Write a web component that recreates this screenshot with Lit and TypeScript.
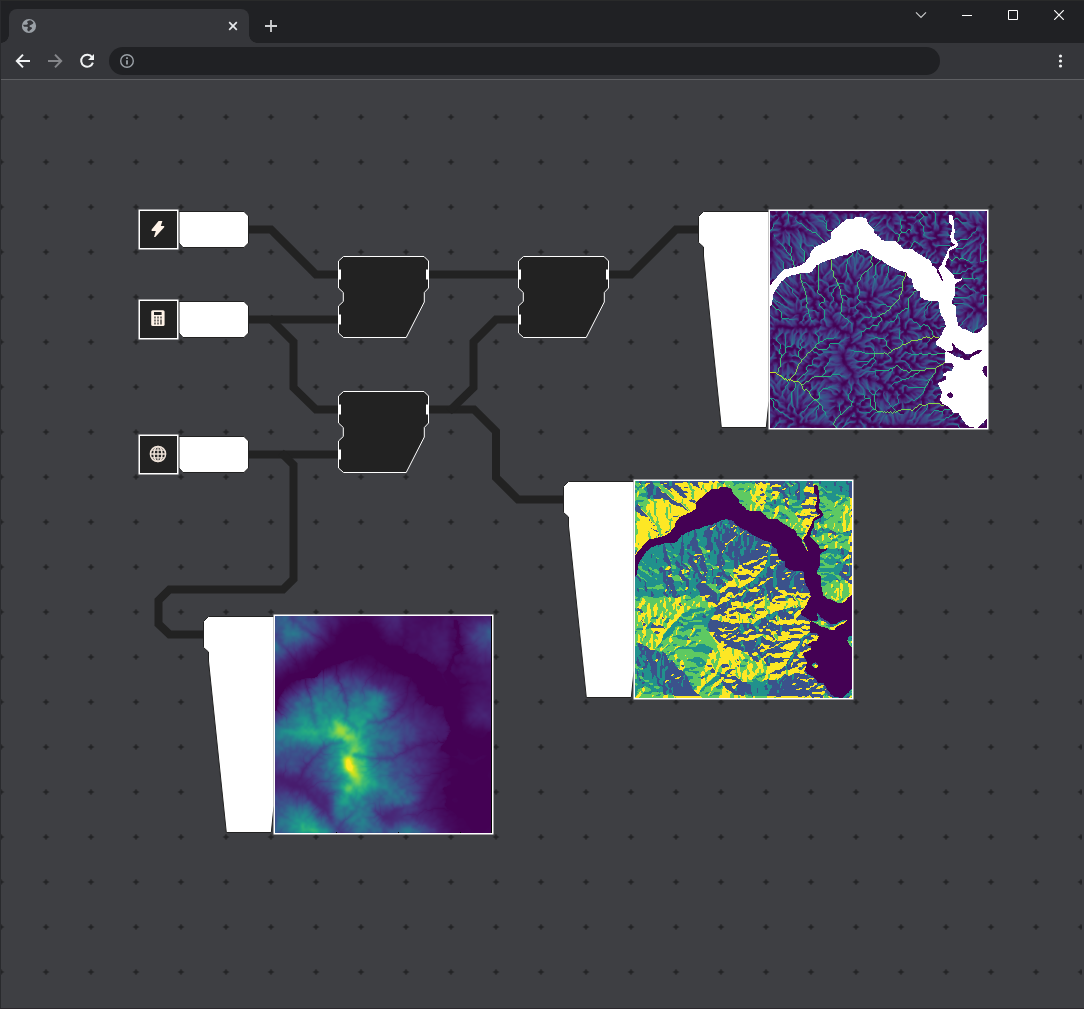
import { LitElement, html, svg, css } from "lit";
import { customElement } from "lit/decorators.js";

type Pt = [number, number];

const N = 217;

const parse = (s: string): Pt[] => s.trim().split(/\s+/).map((p) => p.split(",").map(Number) as Pt);

/* Water outline and islands, in thirds of a raster cell. */
const WATER = parse(`0,225 12,207 28,189 45,174 60,172 78,167 90,165 105,153 120,135 122,125 135,107 150,102 168,94 182,84 184,62 198,52 215,35 230,25 250,23 257,17 275,17 290,25 295,37 310,54 315,67 328,77 335,88 345,90 377,90 382,97 390,102 400,114 425,114 442,125 460,137 482,149 486,162 500,174 503,184 516,210 521,213 517,199 506,175 512,165 522,147 528,132 535,112 550,104 557,103 545,92 539,75 545,62 547,42 540,35 538,12 547,12 550,27 552,47 555,62 551,72 552,82 565,97 563,105 550,113 538,119 537,139 530,147 524,167 535,177 550,192 555,205 575,202 575,208 557,215 553,237 554,252 546,267 546,279 556,282 557,312 563,342 575,352 595,359 612,367 630,364 640,349 651,342 651,464 640,467 637,479 644,492 651,500 651,622 640,635 628,645 622,651 600,648 588,639 575,622 565,607 550,605 535,587 518,579 510,567 515,542 508,527 505,515 528,507 528,497 515,492 530,482 545,479 550,465 545,457 525,455 525,427 528,419 514,410 500,402 500,392 515,372 517,359 528,345 522,327 510,307 506,272 480,269 460,264 452,257 450,242 432,232 428,219 425,205 410,195 410,185 390,179 370,170 350,159 335,147 320,142 305,132 295,119 278,114 260,117 245,125 230,132 210,135 198,142 180,145 160,154 140,162 128,180 115,187 90,186 70,192 50,197 35,212 22,227 12,247 7,277 0,292`);
const ISLANDS = [
  parse("526,421 545,421 549,410 544,394 548,395 556,407 575,420 588,429 605,428 620,418 638,416 628,427 605,437 598,447 588,449 575,440 555,436 540,426"),
  parse("532,549 539,546 543,541 546,549 550,552 547,560 540,561 531,556"),
];

/* Broad relief, one sample every 50 units. */
const RELIEF = [
  [32, 28, 25, 14, 4, 1, 4, 12, 5, 3, 4, 4, 8, 10],
  [27, 35, 28, 10, 0, 0, 0, 6, 4, 5, 6, 3, 20, 30],
  [32, 20, 11, 1, 0, 0, 0, 0, 3, 5, 7, 2, 13, 19],
  [12, 4, 0, 0, 6, 5, 3, 0, 0, 2, 3, 3, 6, 9],
  [0, 2, 14, 27, 24, 24, 13, 8, 4, 0, 0, 1, 4, 6],
  [1, 24, 36, 40, 36, 38, 45, 20, 8, 3, 0, 0, 5, 6],
  [16, 38, 50, 50, 54, 53, 43, 23, 16, 10, 5, 0, 9, 10],
  [42, 50, 57, 62, 74, 60, 38, 28, 20, 13, 8, 0, 0, 2],
  [30, 28, 28, 36, 58, 68, 40, 28, 17, 11, 4, 0, 1, 0],
  [19, 24, 22, 36, 60, 70, 42, 28, 20, 12, 3, 0, 0, 0],
  [11, 10, 13, 27, 48, 72, 52, 34, 24, 11, 3, 0, 0, 0],
  [26, 24, 20, 14, 44, 50, 30, 34, 31, 10, 3, 0, 0, 0],
  [31, 44, 50, 23, 36, 43, 27, 12, 16, 9, 3, 0, 0, 0],
  [32, 46, 66, 52, 20, 38, 32, 30, 42, 26, 9, 1, 0, 0],
];

/* Crests: x, y, radius, gain. */
const CRESTS: [number, number, number, number][] = [
  [185, 327, 12, 0.12], [200, 342, 10, 0.1], [215, 360, 10, 0.1], [228, 380, 10, 0.1], [235, 402, 11, 0.16],
  [218, 432, 12, 0.34], [224, 454, 11, 0.34], [234, 475, 11, 0.12], [252, 492, 12, 0.06],
  [214, 516, 11, 0.22], [200, 550, 12, 0.12], [186, 580, 14, 0.08],
];

const STREAMS: Pt[][] = [
  parse("0,479 22,486 45,504 80,511 115,547 155,587 178,627 186,632"),
  parse("45,504 62,500 85,465 110,430 135,402 150,388 195,376"),
  parse("186,632 210,610 230,592 250,570"),
  parse("525,455 500,462 475,500 455,547 430,567 390,569 360,585 320,607 300,585"),
  parse("506,376 460,378 420,389 380,410 350,425 290,427 240,415"),
  parse("92,192 100,230 110,260 112,295 120,330"),
  parse("185,148 188,190 205,225 215,262 212,310 245,335"),
  parse("400,188 392,240 378,270 345,305 310,318 280,316"),
  parse("70,162 62,135 35,100 12,75 0,62"),
  parse("155,92 145,70 110,52 80,27 50,5"),
  parse("382,90 390,60 387,25 392,0"),
  parse("155,0 162,30 168,62"),
  parse("650,145 610,150 580,140 540,142"),
  parse("650,215 620,200 585,202"),
];

const VIRIDIS = [
  [68, 1, 84], [71, 24, 106], [72, 40, 120], [67, 62, 133], [59, 82, 139], [49, 104, 142],
  [42, 120, 142], [35, 136, 142], [31, 152, 139], [34, 168, 132], [53, 183, 121],
  [84, 197, 104], [122, 209, 81], [165, 219, 54], [210, 226, 27], [253, 231, 37],
];

const viridis = (t: number): number[] => {
  const p = Math.min(0.9999, Math.max(0, t)) * 15;
  const i = Math.floor(p);
  const f = p - i;
  return VIRIDIS[i].map((c, k) => c + (VIRIDIS[i + 1][k] - c) * f);
};

/* Colour position for a drained area: crests stay dark, slopes level out, channels climb. */
const FLOW_STOPS: Pt[] = [[0, 0], [0.22, 0.02], [0.75, 0.2], [1.3, 0.29], [1.7, 0.36], [2.1, 0.54], [2.9, 0.72], [3.6, 0.9], [5, 1]];
const flowTone = (area: number): number => {
  const l = Math.log10(area);
  let k = 0;
  while (k < FLOW_STOPS.length - 2 && l > FLOW_STOPS[k + 1][0]) k++;
  const [a, u] = FLOW_STOPS[k], [b, v] = FLOW_STOPS[k + 1];
  return u + ((v - u) * (l - a)) / (b - a);
};

const hash = (x: number, y: number, s: number): number => {
  let h = Math.imul(x, 374761393) ^ Math.imul(y, 668265263) ^ Math.imul(s, 974634777);
  h = Math.imul(h ^ (h >>> 13), 1274126177);
  h ^= h >>> 16;
  return (h >>> 0) / 4294967296;
};
const ease = (t: number) => t * t * (3 - 2 * t);
const noise = (x: number, y: number, s: number): number => {
  const i = Math.floor(x), j = Math.floor(y);
  const u = ease(x - i), v = ease(y - j);
  const a = hash(i, j, s), b = hash(i + 1, j, s), c = hash(i, j + 1, s), d = hash(i + 1, j + 1, s);
  return a + (b - a) * u + (c - a) * v + (a - b - c + d) * u * v - 0.5;
};

const cubic = (a: number, b: number, c: number, d: number, t: number) =>
  b + 0.5 * t * (c - a + t * (2 * a - 5 * b + 4 * c - d + t * (3 * (b - c) + d - a)));

const relief = (x: number, y: number): number => {
  const gx = x / 50, gy = y / 50;
  const i = Math.floor(gx), j = Math.floor(gy);
  const at = (r: number, c: number) => RELIEF[Math.max(0, Math.min(13, r))][Math.max(0, Math.min(13, c))];
  const rows = [-1, 0, 1, 2].map((k) => cubic(at(j + k, i - 1), at(j + k, i), at(j + k, i + 1), at(j + k, i + 2), gx - i));
  return Math.max(0, cubic(rows[0], rows[1], rows[2], rows[3], gy - j)) / 100;
};

const DX = [1, 1, 0, -1, -1, -1, 0, 1];
const DY = [0, 1, 1, 1, 0, -1, -1, -1];

interface Terrain { water: Uint8Array; height: Float64Array; flow: Float64Array; }

function waterMask(): Uint8Array {
  const c = document.createElement("canvas");
  c.width = c.height = N;
  const g = c.getContext("2d")!;
  const trace = (pts: Pt[]) => {
    g.beginPath();
    pts.forEach(([x, y], i) => {
      const px = x / 3 + (i ? (hash(i, 1, 4) - 0.5) * 0.8 : 0), py = y / 3;
      i ? g.lineTo(px, py) : g.moveTo(px, py);
    });
    g.closePath();
    g.fill();
  };
  trace(WATER);
  g.globalCompositeOperation = "destination-out";
  ISLANDS.forEach(trace);
  const d = g.getImageData(0, 0, N, N).data;
  const m = new Uint8Array(N * N);
  for (let y = 0; y < N; y++) for (let x = 0; x < N; x++) {
    const jag = noise(x / 1.6, y / 1.6, 12) * 150;
    m[y * N + x] = d[(y * N + x) * 4 + 3] > 115 + jag ? 1 : 0;
  }
  return m;
}

/* Priority flood from the outlets: visiting order and downstream receiver. */
function flood(h: Float64Array, outlet: Uint8Array, order: Int32Array, rec: Int32Array) {
  const total = N * N;
  const seen = new Uint8Array(total);
  const key = new Float64Array(total);
  const heap = new Int32Array(total + 1);
  let size = 0, n = 0;
  const push = (v: number) => {
    let i = ++size;
    while (i > 1 && key[heap[i >> 1]] > key[v]) { heap[i] = heap[i >> 1]; i >>= 1; }
    heap[i] = v;
  };
  const pop = () => {
    const top = heap[1], v = heap[size--];
    let i = 1;
    for (;;) {
      let c = i * 2;
      if (c > size) break;
      if (c < size && key[heap[c + 1]] < key[heap[c]]) c++;
      if (key[heap[c]] >= key[v]) break;
      heap[i] = heap[c];
      i = c;
    }
    heap[i] = v;
    return top;
  };
  for (let i = 0; i < total; i++) if (outlet[i]) { seen[i] = 1; key[i] = h[i]; rec[i] = i; push(i); }
  while (size) {
    const i = pop();
    order[n++] = i;
    const x = i % N, y = (i / N) | 0;
    if (!outlet[i]) {
      let best = 0, r = rec[i];
      for (let k = 0; k < 8; k++) {
        const a = x + DX[k], b = y + DY[k];
        if (a < 0 || b < 0 || a >= N || b >= N) continue;
        const j = b * N + a;
        if (!seen[j] || key[j] >= key[i]) continue;
        const s = (h[i] - h[j]) / (k & 1 ? 1.414 : 1);
        if (s > best) { best = s; r = j; }
      }
      rec[i] = r;
    }
    for (let k = 0; k < 8; k++) {
      const a = x + DX[k], b = y + DY[k];
      if (a < 0 || b < 0 || a >= N || b >= N) continue;
      const j = b * N + a;
      if (seen[j]) continue;
      seen[j] = 1;
      key[j] = Math.max(h[j], key[i] + 1e-7);
      rec[j] = i;
      push(j);
    }
  }
}

function buildTerrain(): Terrain {
  const total = N * N;
  const water = waterMask();
  const target = new Float64Array(total);
  const h = new Float64Array(total);
  const outlet = new Uint8Array(total);
  const groove = new Float64Array(total);

  for (const s of STREAMS) {
    for (let k = 0; k + 1 < s.length; k++) {
      const [x0, y0] = s[k], [x1, y1] = s[k + 1];
      const steps = Math.ceil(Math.hypot(x1 - x0, y1 - y0) / 1.5);
      for (let q = 0; q <= steps; q++) {
        const cx = (x0 + ((x1 - x0) * q) / steps) / 3 + noise(q / 5, k, 8) * 1.6;
        const cy = (y0 + ((y1 - y0) * q) / steps) / 3 + noise(q / 5, k, 9) * 1.6;
        for (let b = -5; b <= 5; b++) for (let a = -5; a <= 5; a++) {
          const x = Math.round(cx) + a, y = Math.round(cy) + b;
          if (x < 0 || y < 0 || x >= N || y >= N) continue;
          const w = Math.exp(-((x - cx) ** 2 + (y - cy) ** 2) / 7);
          groove[y * N + x] = Math.max(groove[y * N + x], w);
        }
      }
    }
  }

  for (let y = 0; y < N; y++) for (let x = 0; x < N; x++) {
    const i = y * N + x;
    const u = x * 3, v = y * 3;
    let t = relief(u, v) * 1.08;
    for (const [cx, cy, r, g] of CRESTS) t += g * Math.exp(-((u - cx) ** 2 + (v - cy) ** 2) / (2 * r * r));
    const rough = noise(x / 10, y / 10, 1) * 0.08 + noise(x / 5.5, y / 5.5, 2) * 0.12 + noise(x / 3, y / 3, 3) * 0.09;
    t = t + 0.015 + rough * (0.1 + Math.min(0.75, t * 1.5));
    target[i] = water[i] ? 0 : Math.max(0.006, t) * (1 - 0.22 * groove[i]);
    const edge = x === 0 || y === 0 || x === N - 1 || y === N - 1;
    outlet[i] = water[i] || edge ? 1 : 0;
    h[i] = target[i] * (edge ? 0.9 : 1);
  }

  const order = new Int32Array(total), rec = new Int32Array(total);
  const area = new Float64Array(total);
  for (let it = 0; it < 18; it++) {
    flood(h, outlet, order, rec);
    area.fill(1);
    for (let n = total - 1; n >= 0; n--) { const i = order[n]; if (rec[i] !== i) area[rec[i]] += area[i]; }
    for (let n = 0; n < total; n++) {
      const i = order[n];
      if (outlet[i]) continue;
      const k = 0.045 * Math.sqrt(Math.max(0, area[i] - 2));
      h[i] = (h[i] + 0.17 * (target[i] - h[i]) + k * h[rec[i]]) / (1 + k);
    }
    const copy = h.slice();
    for (let y = 1; y < N - 1; y++) for (let x = 1; x < N - 1; x++) {
      const i = y * N + x;
      if (!outlet[i]) h[i] += 0.08 * (copy[i - 1] + copy[i + 1] + copy[i - N] + copy[i + N] - 4 * copy[i]);
    }
  }

  flood(h, outlet, order, rec);
  const flow = new Float64Array(total).fill(1);
  for (let n = total - 1; n >= 0; n--) {
    const i = order[n];
    if (outlet[i]) continue;
    if (flow[i] > 50) { flow[rec[i]] += flow[i]; continue; }
    const x = i % N, y = (i / N) | 0;
    let sum = 0;
    const w: number[] = [];
    for (let k = 0; k < 8; k++) {
      const s = Math.max(0, h[i] - h[(y + DY[k]) * N + x + DX[k]]) / (k & 1 ? 1.414 : 1);
      w.push(s ** 1.5);
      sum += w[k];
    }
    if (!sum) { flow[rec[i]] += flow[i]; continue; }
    for (let k = 0; k < 8; k++) if (w[k]) flow[(y + DY[k]) * N + x + DX[k]] += (flow[i] * w[k]) / sum;
  }
  return { water, height: h, flow };
}

let cached: Terrain | undefined;
const terrain = () => (cached ??= buildTerrain());

@customElement("terrain-map")
class TerrainMap extends LitElement {
  static properties = { layer: { type: String } };
  declare layer: string;

  static styles = css`
    :host { display: block; }
    canvas { display: block; width: 217px; height: 217px; }
  `;

  firstUpdated() {
    const g = this.renderRoot.querySelector("canvas")!.getContext("2d")!;
    const img = g.createImageData(N, N);
    const { water, height, flow } = terrain();
    for (let y = 0; y < N; y++) for (let x = 0; x < N; x++) {
      const i = y * N + x;
      let c: number[];
      if (this.layer === "flow") {
        c = water[i] ? [255, 255, 255] : viridis(flowTone(flow[i]));
      } else if (this.layer === "aspect") {
        if (water[i]) c = VIRIDIS[0];
        else {
          const l = Math.max(0, x - 1), r = Math.min(N - 1, x + 1);
          const t = Math.max(0, y - 1), b = Math.min(N - 1, y + 1);
          const dx = (height[y * N + l] - height[y * N + r]) / (r - l);
          const dy = (height[t * N + x] - height[b * N + x]) / (b - t);
          c = dx >= 0 ? (dy < 0 ? [59, 82, 139] : [253, 231, 37]) : dy < 0 ? [33, 145, 140] : [94, 201, 98];
        }
      } else {
        c = viridis(height[i] < 0.02 ? height[i] * 0.5 : height[i] * 0.92 - 0.008);
        if (x === N - 1 || (y === N - 1 && (x === 61 || x === 123 || x === 185))) c = [0, 0, 0];
      }
      img.data.set([c[0], c[1], c[2], 255], i * 4);
    }
    g.putImageData(img, 0, 0);
  }

  render() {
    return html`<canvas width="217" height="217"></canvas>`;
  }
}

const WIRES = [
  "M248,229.5H271L316,274.5H338",
  "M248,319.5H338",
  "M269,317.5L293.5,342V387.5L316,409.5H338",
  "M248,454.5H338",
  "M281,452.5L293.5,465V579L283,589.5H169.5L158.5,600.5V624L169.5,634.5H204",
  "M428,274.5H519",
  "M608,274.5H631L676,229.5H700",
  "M428,409.5H474L496,431.5V477.5L518,499.5H565",
  "M449,411.5L473.5,387.5V342L496,319.5H519",
];

const OUTPUTS = [
  { x: 699, y: 211, layer: "flow" },
  { x: 564, y: 481, layer: "aspect" },
  { x: 204, y: 616, layer: "elevation" },
];

const GLYPHS = [
  svg`<path d="M20.6 12H24.4L22.8 17H26.2V18.2L17.3 28H16L17.8 22H13.6V20.4Z" fill="#fff3e8"/>`,
  svg`<rect x="13.2" y="11.2" width="13.4" height="15.8" rx="1.6" fill="#fff3e8"/><path d="M16 13h7.6v3h-7.6z" fill="#222"/><path d="M16 17.5h2v2h-2zM19 17.5h2v2h-2zM22 17.5h2v2h-2zM16 20.5h2v2h-2zM19 20.5h2v2h-2zM16 23.5h2v2h-2zM19 23.5h2v2h-2zM22 20.5h2v5h-2z" fill="#77726d"/>`,
  svg`<g fill="none" stroke="#efe3d9" stroke-width="1.5"><circle cx="20" cy="20" r="7.6"/><ellipse cx="20" cy="20" rx="4" ry="7.6"/><path d="M20 12.4V27.6M12.4 20H27.6M13.6 16.2H26.4M13.6 23.8H26.4" stroke-width="1.3"/></g>`,
];

@customElement("app-root")
class AppRoot extends LitElement {
  static styles = css`
    :host { display: block; width: 1084px; height: 1009px; overflow: hidden; font-family: "Liberation Sans", sans-serif; }
    .window { box-sizing: border-box; display: flex; flex-direction: column; width: 100%; height: 100%; border-left: 1px solid #292a2d; border-bottom: 1px solid #2a272c; background: #3e3f43; }
    .strip { display: flex; justify-content: space-between; height: 43px; background: #202124; box-shadow: inset 0 1px #292a2a; }
    .tabs { display: flex; align-items: flex-end; }
    .controls { display: flex; padding-top: 6px; padding-right: 2px; }
    .control { display: grid; place-items: center; width: 46px; height: 18px; }
    .tab { box-sizing: border-box; display: flex; align-items: center; justify-content: space-between; width: 240px; height: 34px; margin-left: 8px; padding: 0 10px 0 12px; border-radius: 8px 8px 0 0; background: #35363a; position: relative; }
    .tab::before, .tab::after { content: ""; position: absolute; bottom: 0; width: 8px; height: 8px; }
    .tab::before { left: -8px; background: radial-gradient(circle at 0 0, transparent 7.5px, #35363a 8px); }
    .tab::after { right: -8px; background: radial-gradient(circle at 100% 0, transparent 7.5px, #35363a 8px); }
    .add { display: grid; place-items: center; width: 28px; height: 34px; margin-left: 8px; }
    .bar { box-sizing: border-box; display: flex; align-items: center; height: 37px; padding: 0 9px 1px 6px; background: #35363a; border-bottom: 1px solid #5e5f62; }
    .nav { display: grid; place-items: center; width: 32px; height: 32px; }
    .address { display: flex; align-items: center; width: 821px; height: 28px; margin-left: 6px; padding-left: 10px; border-radius: 14px; background: #202124; }
    .more { display: grid; place-items: center; margin-left: auto; width: 29px; height: 32px; }
    svg { display: block; }
    .board { flex: 1; position: relative; overflow: hidden; }
    .graph { margin-left: -1px; }
    .map { position: absolute; }
  `;

  render() {
    return html`
      <div class="window">
        <div class="strip">
          <div class="tabs">
            <div class="tab">
              <svg width="16" height="16" viewBox="0 0 16 16"><circle cx="8" cy="8" r="7.1" fill="#9aa0a6"/><path d="M9 2.2C6.4 2.6 5.6 3.6 6.4 4.6C7.3 5.5 7.3 6.6 5.6 6.7L2.3 6.8C2 8.4 3 8.9 4.8 8.8C6.8 8.7 7.4 9.4 6.6 10.4C5.8 11.4 6.4 12.9 8.2 13.7C8.1 12.4 9.8 12.2 10.8 10.8C11.5 9.7 10.6 8.9 9.3 8.9C8.2 8.8 8.4 6.9 9.6 6.9C11.1 6.8 12.6 5.8 12.4 4.6C11.4 3.3 10.4 2.5 9 2.2Z" fill="#35363a"/></svg>
              <svg width="12" height="12"><path d="M2.2 2.2L9.8 9.8M9.8 2.2L2.2 9.8" stroke="#e8eaed" stroke-width="1.7"/></svg>
            </div>
            <div class="add"><svg width="14" height="14"><path d="M7 1V13M1 7H13" stroke="#d0d1d3" stroke-width="1.8"/></svg></div>
          </div>
          <div class="controls">
            <div class="control"><svg width="12" height="8"><path d="M1 1.4L6 6.4L11 1.4" fill="none" stroke="#c9cacb" stroke-width="1.2"/></svg></div>
            <div class="control"><svg width="10" height="2"><path d="M0 1.5H10" stroke="#fff"/></svg></div>
            <div class="control"><svg width="10" height="10"><path d="M.5.5H9.5V9.5H.5Z" fill="none" stroke="#fff"/></svg></div>
            <div class="control"><svg width="10" height="10"><path d="M.2.2L9.8 9.8M9.8.2L.2 9.8" stroke="#fff" stroke-width="1.2"/></svg></div>
          </div>
        </div>
        <div class="bar">
          <div class="nav"><svg width="16" height="16"><path d="M15 8H2M8 1.6L1.8 8L8 14.4" fill="none" stroke="#f1f3f4" stroke-width="2"/></svg></div>
          <div class="nav"><svg width="16" height="16"><path d="M1 8H14M8 1.6L14.2 8L8 14.4" fill="none" stroke="#85868a" stroke-width="2"/></svg></div>
          <div class="nav"><svg width="16" height="16"><path d="M13.1 4.3A6 6 0 1 0 13.9 9.6" fill="none" stroke="#f1f3f4" stroke-width="2"/><path d="M15 1V7H9Z" fill="#f1f3f4"/></svg></div>
          <div class="address"><svg width="16" height="16"><circle cx="8" cy="8" r="6.3" fill="none" stroke="#9aa0a6" stroke-width="1.4"/><path d="M8 7.2V11.5M8 4.3V5.9" stroke="#9aa0a6" stroke-width="1.8"/></svg></div>
          <div class="more"><svg width="5" height="14" fill="#f1f3f4"><circle cx="2.5" cy="2" r="1.6"/><circle cx="2.5" cy="7" r="1.6"/><circle cx="2.5" cy="12" r="1.6"/></svg></div>
        </div>
        <div class="board">
          <svg class="graph" width="1084" height="928" viewBox="0 80 1084 928">
            <defs>
              <pattern id="marks" x="23.5" y="95" width="45" height="45" patternUnits="userSpaceOnUse">
                <path d="M22.5 19L23.5 21L25.5 22L23.5 23L22.5 25L21.5 23L19.5 22L21.5 21Z" fill="#222325" stroke="#222325" stroke-width=".5"/>
              </pattern>
            </defs>
            <rect y="80" width="1084" height="928" fill="#3e3f43"/>
            <rect y="80" width="1082" height="928" fill="url(#marks)"/>
            <g fill="none" stroke="#222" stroke-width="8">${WIRES.map((d) => svg`<path d=${d}/>`)}</g>
            ${[[338, 256], [518, 256], [338, 391]].map(([x, y]) => svg`
              <g transform="translate(${x} ${y})">
                <path d="M5.5 .5H86L90.5 5V32L86.3 36.5V46L68.2 81.5H5.5L.5 77V50L5.3 45.5V36.5L.5 32V5Z" fill="#222" stroke="#fff"/>
                <path d="M0 13.4h3v10.2h-3zM0 58.4h3v10.2h-3zM88 13.4h3v10.2h-3z" fill="#fff"/>
              </g>`)}
            ${[209, 299, 434].map((y, i) => svg`
              <g transform="translate(138 ${y})">
                <path d="M41 2.5H106L110.5 7V34L106 38.5H45L41 34Z" fill="#fff" stroke="#222"/>
                <rect x="1.25" y="1.25" width="38.5" height="38.5" fill="#222" stroke="#fff" stroke-width="1.5"/>
                ${GLYPHS[i]}
              </g>`)}
            ${OUTPUTS.map(({ x, y }) => svg`
              <g transform="translate(${x} ${y})">
                <path d="M4.5 .5H70V190L67.3 216.5H22.3L4.5 45V36L-.5 31.5V5.5Z" fill="#fff" stroke="#222"/>
                <rect x="70.25" y="-.75" width="218.5" height="218.5" fill="#222" stroke="#fff" stroke-width="1.5"/>
              </g>`)}
          </svg>
          ${OUTPUTS.map(({ x, y, layer }) => html`<terrain-map class="map" layer=${layer} style="left:${x + 70}px;top:${y - 80}px"></terrain-map>`)}
        </div>
      </div>
    `;
  }
}
